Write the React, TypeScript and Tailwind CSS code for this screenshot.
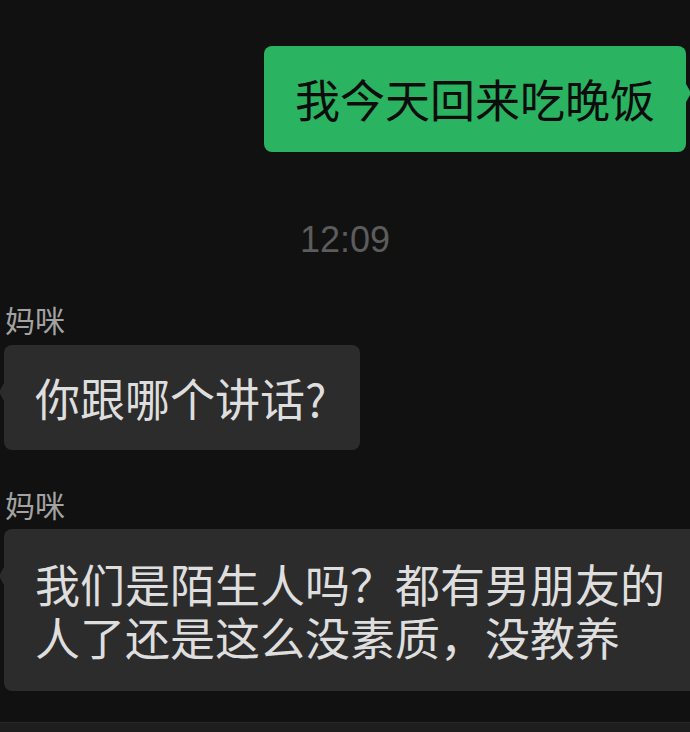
const CJK = "font-['Noto_Sans_CJK_SC','Noto_Sans',sans-serif]";

function Tail({ side, color }: { side: "left" | "right"; color: string }) {
  return side === "left" ? (
    <span
      className={`absolute -left-[5px] top-[36px] h-0 w-0 border-y-[11px] border-r-[6px] border-y-transparent ${color}`}
    />
  ) : (
    <span
      className={`absolute -right-[5px] top-[36px] h-0 w-0 border-y-[11px] border-l-[6px] border-y-transparent ${color}`}
    />
  );
}

function Name({ children }: { children: string }) {
  return (
    <p className={`${CJK} pl-[5px] text-[30px] leading-[36px] text-[#a3a3a3]`}>
      {children}
    </p>
  );
}

export default function App() {
  return (
    <div className="flex h-[732px] w-full flex-col overflow-hidden bg-[#111111]">
      {/* Outgoing */}
      <div className="flex justify-end pr-[4px] pt-[46px]">
        <div
          className={`${CJK} relative rounded-[8px] bg-[#2ab361] px-[31px] py-[26px] text-[45px] leading-[54px] text-[#0c0c0c]`}
        >
          我今天回来吃晚饭
          <Tail side="right" color="border-l-[#2ab361]" />
        </div>
      </div>

      {/* Time */}
      <p className="mt-[67px] text-center font-['Liberation_Sans',Arial,sans-serif] text-[36px] leading-[42px] text-[#5c5c5c]">
        12:09
      </p>

      {/* Incoming */}
      <div className="mt-[40px]">
        <Name>妈咪</Name>
      </div>
      <div className="mt-[8px] flex pl-[4px]">
        <div
          className={`${CJK} relative rounded-[8px] bg-[#2c2c2c] py-[26px] pl-[31px] pr-[34px] text-[45px] leading-[53px] text-[#dedede]`}
        >
          你跟哪个讲话?
          <Tail side="left" color="border-r-[#2c2c2c]" />
        </div>
      </div>

      <div className="mt-[36px]">
        <Name>妈咪</Name>
      </div>
      <div className="mt-[7px] flex pl-[4px]">
        <div
          className={`${CJK} relative flex w-[720px] shrink-0 flex-col rounded-[8px] bg-[#2c2c2c] px-[31px] py-[28px] text-[45px] leading-[53px] text-[#dedede]`}
        >
          <span>我们是陌生人吗？都有男朋友的</span>
          <span>人了还是这么没素质，没教养</span>
          <Tail side="left" color="border-r-[#2c2c2c]" />
        </div>
      </div>

      {/* Input bar edge */}
      <div className="mt-[31px] flex-1 border-t border-[#282828] bg-[#1e1e1e]" />
    </div>
  );
}
